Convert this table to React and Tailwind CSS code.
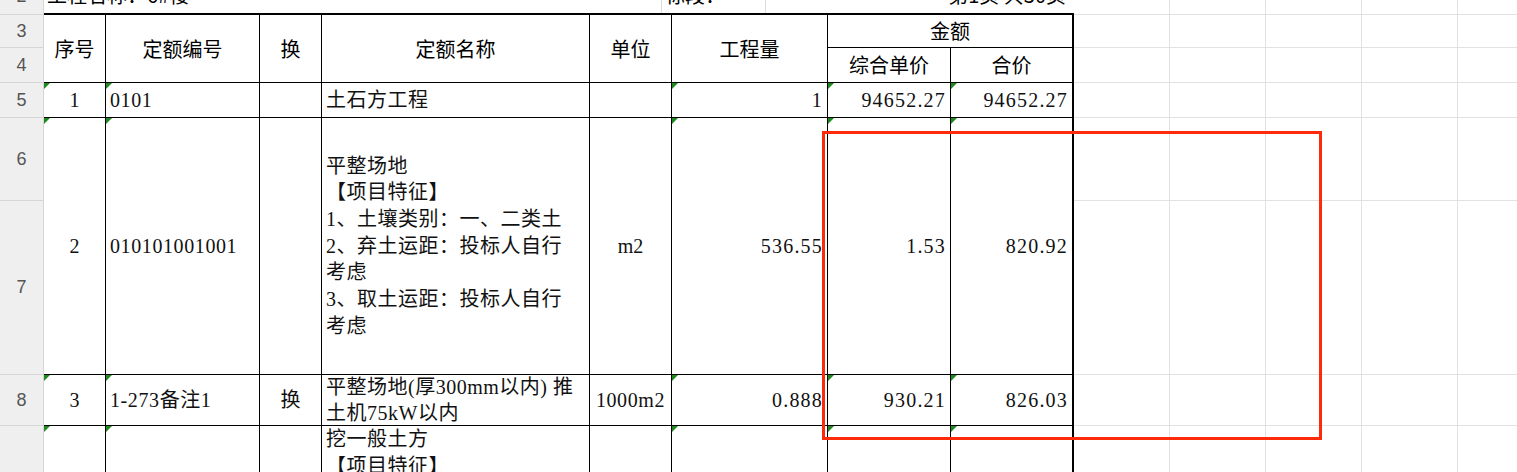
import clsx from 'clsx'

const head = "font-['Noto_Sans_CJK_SC',sans-serif] text-[20px] text-black"
const data = "font-['Liberation_Serif','Noto_Sans_CJK_SC',serif] text-[20px] text-[#111]"

function Tri() {
  return <span className="absolute left-0 top-0 h-[6px] w-[6px] bg-[#1d8a1d] [clip-path:polygon(0_0,100%_0,0_100%)]" />
}

function RowNo({ n, className }) {
  return (
    <div
      className={clsx(
        "flex items-center justify-center border-r border-b border-[#d6d6d6] bg-[#efefef] font-['Liberation_Sans',sans-serif] text-[18px] text-[#555]",
        className
      )}
    >
      {n}
    </div>
  )
}

function Blank({ className }) {
  return <div className={clsx('border-r border-b border-[#e2e2e2]', className)} />
}

function Cell({ className, tri, align = 'center', children }) {
  return (
    <div
      className={clsx(
        'relative flex items-center overflow-hidden border-b border-black',
        align === 'center' && 'justify-center',
        align === 'left' && 'justify-start pl-[4px]',
        align === 'right' && 'justify-end pr-[4px] tracking-[1.2px]',
        className
      )}
    >
      {tri && <Tri />}
      {children}
    </div>
  )
}

function Spare({ row }) {
  return (
    <>
      <Blank className={clsx('col-start-10', row)} />
      <Blank className={clsx('col-start-11', row)} />
      <Blank className={clsx('col-start-12', row)} />
      <Blank className={clsx('col-start-13', row)} />
      <Blank className={clsx('col-start-14', row)} />
    </>
  )
}

export default function App() {
  return (
    <div className="relative h-[472px] w-full overflow-hidden bg-white">
      <div className="-mt-[22px] grid w-max grid-cols-[44px_62px_154px_62px_268px_82px_156px_123px_123px_96px_96px_96px_96px_96px] grid-rows-[37px_33px_35px_35px_83px_174px_51px_200px]">
        {/* row numbers */}
        <RowNo n="2" className="col-start-1 row-start-1" />
        <RowNo n="3" className="col-start-1 row-start-2" />
        <RowNo n="4" className="col-start-1 row-start-3" />
        <RowNo n="5" className="col-start-1 row-start-4" />
        <RowNo n="6" className="col-start-1 row-start-5" />
        <RowNo n="7" className="col-start-1 row-start-6" />
        <RowNo n="8" className="col-start-1 row-start-7" />
        <RowNo n="" className="col-start-1 row-start-8" />

        {/* row 2: title line */}
        <div className={clsx('col-span-8 col-start-2 row-start-1 flex border-b-2 border-black', head)}>
          <div className="flex w-[618px] items-end border-r border-[#dcdcdc] pb-[3px] pl-[3px]">工程名称：6#楼</div>
          <div className="flex w-[104px] items-end border-r border-[#dcdcdc] pb-[3px] pl-[3px]">标段：</div>
          <div className="flex flex-1 items-end justify-end pb-[3px] pr-[8px]">第1页 共30页</div>
        </div>
        <Spare row="row-start-1" />

        {/* rows 3-4: header */}
        <Cell className={clsx('col-start-2 row-span-2 row-start-2 border-r', head)}>序号</Cell>
        <Cell className={clsx('col-start-3 row-span-2 row-start-2 border-r', head)}>定额编号</Cell>
        <Cell className={clsx('col-start-4 row-span-2 row-start-2 border-r', head)}>换</Cell>
        <Cell className={clsx('col-start-5 row-span-2 row-start-2 border-r', head)}>定额名称</Cell>
        <Cell className={clsx('col-start-6 row-span-2 row-start-2 border-r', head)}>单位</Cell>
        <Cell className={clsx('col-start-7 row-span-2 row-start-2 border-r', head)}>工程量</Cell>
        <Cell className={clsx('col-span-2 col-start-8 row-start-2 border-r-2', head)}>金额</Cell>
        <Cell className={clsx('col-start-8 row-start-3 border-r', head)}>综合单价</Cell>
        <Cell className={clsx('col-start-9 row-start-3 border-r-2', head)}>合价</Cell>
        <Spare row="row-start-2" />
        <Spare row="row-start-3" />

        {/* row 5 */}
        <Cell tri className={clsx('col-start-2 row-start-4 border-r', data)}>1</Cell>
        <Cell tri align="left" className={clsx('col-start-3 row-start-4 border-r tracking-[0.6px]', data)}>0101</Cell>
        <Cell className={clsx('col-start-4 row-start-4 border-r', data)} />
        <Cell align="left" className={clsx('col-start-5 row-start-4 border-r tracking-[0.5px]', data)}>土石方工程</Cell>
        <Cell className={clsx('col-start-6 row-start-4 border-r', data)} />
        <Cell tri align="right" className={clsx('col-start-7 row-start-4 border-r', data)}>1</Cell>
        <Cell tri align="right" className={clsx('col-start-8 row-start-4 border-r', data)}>94652.27</Cell>
        <Cell tri align="right" className={clsx('col-start-9 row-start-4 border-r-2', data)}>94652.27</Cell>
        <Spare row="row-start-4" />

        {/* rows 6-7 */}
        <Cell tri className={clsx('col-start-2 row-span-2 row-start-5 border-r', data)}>2</Cell>
        <Cell tri align="left" className={clsx('col-start-3 row-span-2 row-start-5 border-r tracking-[0.6px]', data)}>010101001001</Cell>
        <Cell className={clsx('col-start-4 row-span-2 row-start-5 border-r', data)} />
        <Cell align="left" className={clsx('col-start-5 row-span-2 row-start-5 border-r leading-[26.7px] tracking-[0.5px]', data)}>
          <div>
            平整场地
            <br />
            【项目特征】
            <br />
            1、土壤类别：一、二类土
            <br />
            2、弃土运距：投标人自行
            <br />
            考虑
            <br />
            3、取土运距：投标人自行
            <br />
            考虑
          </div>
        </Cell>
        <Cell className={clsx('col-start-6 row-span-2 row-start-5 border-r', data)}>m2</Cell>
        <Cell tri align="right" className={clsx('col-start-7 row-span-2 row-start-5 border-r', data)}>536.55</Cell>
        <Cell tri align="right" className={clsx('col-start-8 row-span-2 row-start-5 border-r', data)}>1.53</Cell>
        <Cell tri align="right" className={clsx('col-start-9 row-span-2 row-start-5 border-r-2', data)}>820.92</Cell>
        <Spare row="row-start-5" />
        <Spare row="row-start-6" />

        {/* row 8 */}
        <Cell tri className={clsx('col-start-2 row-start-7 border-r', data)}>3</Cell>
        <Cell tri align="left" className={clsx('col-start-3 row-start-7 border-r tracking-[0.6px]', data)}>1-273备注1</Cell>
        <Cell className={clsx('col-start-4 row-start-7 border-r', data)}>换</Cell>
        <Cell align="left" className={clsx('col-start-5 row-start-7 border-r leading-[26px] tracking-[0.5px]', data)}>
          <div>
            平整场地(厚300mm以内) 推
            <br />
            土机75kW以内
          </div>
        </Cell>
        <Cell className={clsx('col-start-6 row-start-7 border-r tracking-[0.6px]', data)}>1000m2</Cell>
        <Cell tri align="right" className={clsx('col-start-7 row-start-7 border-r', data)}>0.888</Cell>
        <Cell tri align="right" className={clsx('col-start-8 row-start-7 border-r', data)}>930.21</Cell>
        <Cell tri align="right" className={clsx('col-start-9 row-start-7 border-r-2', data)}>826.03</Cell>
        <Spare row="row-start-7" />

        {/* row 9 */}
        <Cell tri className={clsx('col-start-2 row-start-8 border-r', data)} />
        <Cell tri className={clsx('col-start-3 row-start-8 border-r', data)} />
        <Cell className={clsx('col-start-4 row-start-8 border-r', data)} />
        <div className={clsx('col-start-5 row-start-8 border-r border-black pl-[4px] leading-[26.7px] tracking-[0.5px]', data)}>
          挖一般土方
          <br />
          【项目特征】
        </div>
        <Cell className={clsx('col-start-6 row-start-8 border-r', data)} />
        <Cell tri className={clsx('col-start-7 row-start-8 border-r', data)} />
        <Cell tri className={clsx('col-start-8 row-start-8 border-r', data)} />
        <Cell tri className={clsx('col-start-9 row-start-8 border-r-2', data)} />
        <Spare row="row-start-8" />
      </div>

      {/* annotation box */}
      <div className="absolute left-[822px] top-[131px] h-[309px] w-[500px] border-[3px] border-[#ff2a0a]" />
    </div>
  )
}
